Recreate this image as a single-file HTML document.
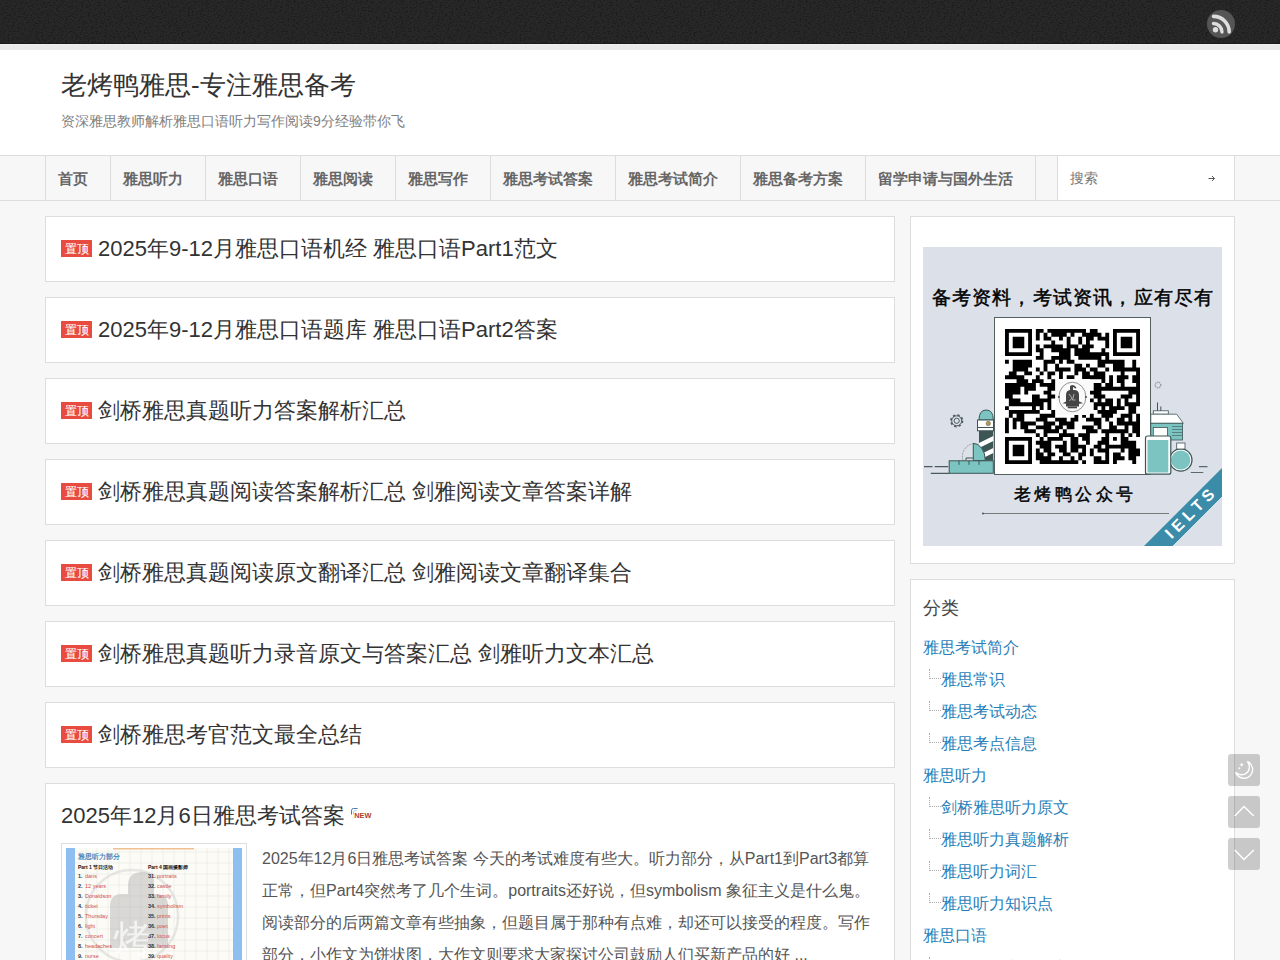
<!DOCTYPE html>
<html><head><meta charset="utf-8">
<style>
*{box-sizing:border-box;margin:0;padding:0}
html,body{width:1280px;height:960px;overflow:hidden}
body{font-family:"Liberation Sans",sans-serif;background:#f7f7f7;color:#333;position:relative}
.topbar{position:absolute;left:0;top:0;width:1280px;height:44px;background:#1e1e1e;border-bottom:1px solid #1b1b1b;overflow:hidden}
.stripe{position:absolute;left:0;top:44px;width:1280px;height:6px;background:#eaeaea;border-top:1px solid #f0f0f0}
.header{position:absolute;left:0;top:50px;width:1280px;height:105px;background:#fff}
.site-title{position:absolute;left:61px;top:68px;font-size:26px;line-height:34px;color:#333;white-space:nowrap}
.site-desc{position:absolute;left:61px;top:112px;font-size:14px;line-height:18px;color:#808080;white-space:nowrap}
.nav{position:absolute;left:0;top:155px;width:1280px;height:46px;background:#f7f7f7;border-top:1px solid #ddd;border-bottom:1px solid #ddd}
.nav ul{position:absolute;left:45px;top:0;height:44px;list-style:none;border-left:1px solid #ddd;display:flex}
.nav li{height:44px;line-height:44px;padding:1px 22px 0 12px;border-right:1px solid #ddd;font-size:15px;font-weight:bold;color:#666;white-space:nowrap}
.search{position:absolute;left:1057px;top:0;width:178px;height:44px;background:#fff;border-left:1px solid #ddd;border-right:1px solid #ddd}
.search span{position:absolute;left:12px;top:0;line-height:44px;font-size:14px;color:#777}
.search svg{position:absolute;left:150px;top:18.5px}
.box{position:absolute;left:45px;width:850px;height:66px;background:#fff;border:1px solid #ddd}
.box h2{position:absolute;left:15px;top:0;line-height:64px;font-size:22px;font-weight:normal;color:#333;white-space:nowrap}
.badge{display:inline-block;vertical-align:top;margin-top:23px;width:31px;height:17px;background:#e84b3f;color:#fff;font-size:12px;line-height:19px;text-align:center;margin-right:6px;-webkit-text-stroke:0.12px #fff}
.side{position:absolute;left:910px;width:325px;background:#fff;border:1px solid #ddd}
.qr{position:absolute;left:12px;top:30px;width:299px;height:299px;overflow:hidden}
.cat h3{position:absolute;left:12px;top:16px;font-size:18px;font-weight:normal;color:#444;line-height:24px}
.cat ul{position:absolute;left:12px;top:52px;list-style:none}
.cat li{font-size:16px;line-height:32px;height:32px;color:#2a7fba;white-space:nowrap;position:relative}
.cat li.sub{padding-left:18px}
.cat li.sub:before{content:"";position:absolute;left:6px;top:5px;width:11px;height:9px;border-left:1px dotted #aaa;border-bottom:1px dotted #aaa}
.post{position:absolute;left:45px;top:783px;width:850px;height:200px;background:#fff;border:1px solid #ddd}
.post h2{position:absolute;left:15px;top:17px;font-size:22px;font-weight:normal;line-height:30px;color:#333;white-space:nowrap}
.newic{position:absolute;left:304px;top:22px}
.thumb{position:absolute;left:15px;top:59px;width:186px;height:140px;border:1px solid #ddd;background:#fff;overflow:hidden}
.excerpt{position:absolute;left:216px;top:59px;width:620px;font-size:16px;line-height:32px;color:#555}
.fbtn{position:absolute;left:1228px;width:32px;height:32px;background:rgba(0,0,0,0.19);border-radius:3px}
.fbtn svg{position:absolute;left:0;top:0}
.rss{position:absolute;left:1207px;top:10px}
</style></head><body>
<div class="topbar"><svg width="1280" height="43" style="position:absolute;left:0;top:0"><filter id="nz" x="0" y="0" width="100%" height="100%"><feTurbulence type="fractalNoise" baseFrequency="0.5 0.8" numOctaves="2" seed="3"/><feColorMatrix values="3 0 0 0 -1  3 0 0 0 -1  3 0 0 0 -1  0 0 0 0 0.05"/></filter><rect width="1280" height="43" filter="url(#nz)"/></svg></div>
<div class="stripe"></div>
<svg class="rss" width="28" height="28" viewBox="0 0 28 28"><circle cx="14" cy="14" r="14" fill="#555"/><circle cx="8.5" cy="19.7" r="2.7" fill="#ddd"/><path d="M6.5 13.5a8.5 8.5 0 0 1 8.5 8.5" fill="none" stroke="#ddd" stroke-width="3.4" stroke-linecap="round"/><path d="M6.6 6.4a15.6 15.6 0 0 1 15.6 15.6" fill="none" stroke="#ddd" stroke-width="3.6" stroke-linecap="round"/></svg>
<div class="header"></div>
<div class="site-title">老烤鸭雅思-专注雅思备考</div>
<div class="site-desc">资深雅思教师解析雅思口语听力写作阅读9分经验带你飞</div>
<div class="nav">
<ul><li>首页</li><li>雅思听力</li><li>雅思口语</li><li>雅思阅读</li><li>雅思写作</li><li>雅思考试答案</li><li>雅思考试简介</li><li>雅思备考方案</li><li>留学申请与国外生活</li></ul>
<div class="search"><span>搜索</span><svg width="8" height="7" viewBox="0 0 8 7"><path d="M0.5 3.5h6M4 1L6.5 3.5 4 6" fill="none" stroke="#555" stroke-width="1"/></svg></div>
</div>

<div class="box" style="top:216px"><h2><span class="badge">置顶</span>2025年9-12月雅思口语机经 雅思口语Part1范文</h2></div>
<div class="box" style="top:297px"><h2><span class="badge">置顶</span>2025年9-12月雅思口语题库 雅思口语Part2答案</h2></div>
<div class="box" style="top:378px"><h2><span class="badge">置顶</span>剑桥雅思真题听力答案解析汇总</h2></div>
<div class="box" style="top:459px"><h2><span class="badge">置顶</span>剑桥雅思真题阅读答案解析汇总 剑雅阅读文章答案详解</h2></div>
<div class="box" style="top:540px"><h2><span class="badge">置顶</span>剑桥雅思真题阅读原文翻译汇总 剑雅阅读文章翻译集合</h2></div>
<div class="box" style="top:621px"><h2><span class="badge">置顶</span>剑桥雅思真题听力录音原文与答案汇总 剑雅听力文本汇总</h2></div>
<div class="box" style="top:702px"><h2><span class="badge">置顶</span>剑桥雅思考官范文最全总结</h2></div>

<div class="post">
<h2>2025年12月6日雅思考试答案</h2>
<svg class="newic" width="24" height="13" viewBox="0 0 24 13"><path d="M1.5 8.5V4.5Q1.5 2.5 3.5 2.5H7.5" fill="none" stroke="#4a78a8" stroke-width="1"/><path d="M3.5 8.5V6Q3.5 4.5 5 4.5H6.5" fill="none" stroke="#a8c0dc" stroke-width="0.8"/><text x="4.2" y="11.5" font-family="Liberation Sans" font-size="7" font-weight="bold" fill="#b0402a" textLength="17.2" lengthAdjust="spacingAndGlyphs">NEW</text></svg>
<div class="thumb"><svg width="176" height="130" viewBox="0 0 176 130" style="position:absolute;left:4px;top:4px" font-family="Liberation Sans">
<rect width="176" height="130" fill="#fcfbf6"/>
<path d="M20 0v130M31 0v130M42 0v130M53 0v130M64 0v130M75 0v130M86 0v130M97 0v130M108 0v130M119 0v130M130 0v130M141 0v130M152 0v130M163 0v130M9 4h158M9 15h158M9 26h158M9 37h158M9 48h158M9 59h158M9 70h158M9 81h158M9 92h158M9 103h158M9 114h158M9 125h158" stroke="#e6ebe8" stroke-width="0.6"/>
<rect x="0" y="0" width="9" height="130" fill="#8fbff0"/>
<rect x="167" y="0" width="9" height="130" fill="#8fbff0"/>
<rect x="47" y="0" width="81" height="1.5" fill="#f0c090"/>
<text x="12" y="11" font-size="6.5" font-weight="bold" fill="#4a80b8">雅思听力部分</text>
<text x="12" y="20.5" font-size="5" font-weight="bold" fill="#111">Part 1 节日活动</text>
<text x="82" y="20.5" font-size="5" font-weight="bold" fill="#111">Part 4 国画摄影师</text>
<circle cx="66" cy="68" r="46" fill="none" stroke="#ccc" stroke-width="2.5" opacity="0.45"/>
<path d="M44 100 v-42 q0-12 12-12 h6 v-8 q0-14 14-14 q12 0 12 10 v12 h2 q12 0 12 12 v42 z" fill="#999" opacity="0.35"/>
<text x="12" y="30.2" font-size="5.5" font-weight="bold" fill="#333">1.</text><text x="19" y="30.2" font-size="5.5" fill="#d05050">dans</text><text x="82" y="30.2" font-size="5.5" font-weight="bold" fill="#333">31.</text><text x="91" y="30.2" font-size="5.5" fill="#d05050">portraits</text><text x="12" y="40.1" font-size="5.5" font-weight="bold" fill="#333">2.</text><text x="19" y="40.1" font-size="5.5" fill="#d05050">12 years</text><text x="82" y="40.1" font-size="5.5" font-weight="bold" fill="#333">32.</text><text x="91" y="40.1" font-size="5.5" fill="#d05050">castle</text><text x="12" y="49.9" font-size="5.5" font-weight="bold" fill="#333">3.</text><text x="19" y="49.9" font-size="5.5" fill="#d05050">Donaldson</text><text x="82" y="49.9" font-size="5.5" font-weight="bold" fill="#333">33.</text><text x="91" y="49.9" font-size="5.5" fill="#d05050">family</text><text x="12" y="59.9" font-size="5.5" font-weight="bold" fill="#333">4.</text><text x="19" y="59.9" font-size="5.5" fill="#d05050">ticket</text><text x="82" y="59.9" font-size="5.5" font-weight="bold" fill="#333">34.</text><text x="91" y="59.9" font-size="5.5" fill="#d05050">symbolism</text><text x="12" y="69.8" font-size="5.5" font-weight="bold" fill="#333">5.</text><text x="19" y="69.8" font-size="5.5" fill="#d05050">Thursday</text><text x="82" y="69.8" font-size="5.5" font-weight="bold" fill="#333">35.</text><text x="91" y="69.8" font-size="5.5" fill="#d05050">prints</text><text x="12" y="79.8" font-size="5.5" font-weight="bold" fill="#333">6.</text><text x="19" y="79.8" font-size="5.5" fill="#d05050">light</text><text x="82" y="79.8" font-size="5.5" font-weight="bold" fill="#333">36.</text><text x="91" y="79.8" font-size="5.5" fill="#d05050">poet</text><text x="12" y="89.8" font-size="5.5" font-weight="bold" fill="#333">7.</text><text x="19" y="89.8" font-size="5.5" fill="#d05050">concert</text><text x="82" y="89.8" font-size="5.5" font-weight="bold" fill="#333">37.</text><text x="91" y="89.8" font-size="5.5" fill="#d05050">locus</text><text x="12" y="99.8" font-size="5.5" font-weight="bold" fill="#333">8.</text><text x="19" y="99.8" font-size="5.5" fill="#d05050">headaches</text><text x="82" y="99.8" font-size="5.5" font-weight="bold" fill="#333">38.</text><text x="91" y="99.8" font-size="5.5" fill="#d05050">farming</text><text x="12" y="109.8" font-size="5.5" font-weight="bold" fill="#333">9.</text><text x="19" y="109.8" font-size="5.5" fill="#d05050">nurse</text><text x="82" y="109.8" font-size="5.5" font-weight="bold" fill="#333">39.</text><text x="91" y="109.8" font-size="5.5" fill="#d05050">quality</text><text x="12" y="119.8" font-size="5.5" font-weight="bold" fill="#333">10.</text><text x="19" y="119.8" font-size="5.5" fill="#d05050">tea</text><text x="82" y="119.8" font-size="5.5" font-weight="bold" fill="#333">40.</text><text x="91" y="119.8" font-size="5.5" fill="#d05050">wood</text>
<text x="66" y="104" text-anchor="middle" font-size="38" fill="#fff" opacity="0.7">烤</text>
</svg></div>
<div class="excerpt">2025年12月6日雅思考试答案 今天的考试难度有些大。听力部分，从Part1到Part3都算正常，但Part4突然考了几个生词。portraits还好说，但symbolism 象征主义是什么鬼。阅读部分的后两篇文章有些抽象，但题目属于那种有点难，却还可以接受的程度。写作部分，小作文为饼状图，大作文则要求大家探讨公司鼓励人们买新产品的好 ...</div>
</div>

<div class="side" style="top:216px;height:348px"><div class="qr"><svg width="300" height="300" viewBox="0 0 300 300" style="position:absolute;left:0;top:0">
<rect width="300" height="300" fill="#dce0e8"/>
<text x="150" y="57" text-anchor="middle" font-family="Liberation Serif" font-size="19" fill="#000" stroke="#000" stroke-width="0.45" letter-spacing="1.2">备考资料，考试资讯，应有尽有</text>
<!-- left illustration -->
<circle cx="33.7" cy="173.8" r="5.8" fill="none" stroke="#4a5a5a" stroke-width="1.6" stroke-dasharray="2.3 2.25"/>
<circle cx="33.7" cy="173.8" r="5" fill="none" stroke="#4a5a5a" stroke-width="1"/>
<circle cx="33.7" cy="173.8" r="2.6" fill="none" stroke="#4a5a5a" stroke-width="1"/>
<path d="M1 219.7h8.5M11.7 219.7h13.5M7.8 226.3h18.5" stroke="#4a5a5a" stroke-width="1.2"/>
<path d="M56 173 q0-10 7.2-10 q7.1 0 7.1 10z" fill="#7cc4c2" stroke="#3d5555" stroke-width="1"/>
<rect x="54.5" y="173" width="16" height="7.5" fill="#fff" stroke="#3d5555" stroke-width="1"/>
<circle cx="65.3" cy="176.5" r="2.2" fill="#b49a4a" stroke="#555" stroke-width="0.5"/>
<rect x="54.5" y="180.5" width="16" height="3.3" fill="#fff" stroke="#3d5555" stroke-width="1"/>
<path d="M56 183.8h14.3v30h-14.3z" fill="#3d5555"/>
<path d="M56 196 l14.3 -7 v5 l-14.3 7z M56 208 l14.3 -7 v5 l-14.3 7z" fill="#fff"/>
<path d="M40 213.5 a13 13 0 0 1 12 -17" fill="none" stroke="#7a8a8a" stroke-width="0.8" stroke-dasharray="2 1"/>
<path d="M50.3 213.5 v-17.2 a12 17.2 0 0 1 12 17.2z" fill="#7cc4c2" stroke="#3d5555" stroke-width="1"/>
<path d="M43 213.5 v-2.5 h7.3" fill="none" stroke="#3d5555" stroke-width="1"/>
<rect x="26.2" y="213.8" width="44.1" height="12.5" fill="#7cc4c2" stroke="#3d5555" stroke-width="1"/>
<path d="M36 213.8v4M46 213.8v4M56 213.8v4" stroke="#3d5555" stroke-width="1"/>
<!-- QR card -->
<rect x="71.5" y="70.5" width="156" height="157" fill="#fff" stroke="#52605f" stroke-width="1"/>
<path transform="translate(82,82)" d="M0.00 0.00h27.00v3.86h-27.00zM30.86 0.00h7.71v3.86h-7.71zM42.43 0.00h38.57v3.86h-38.57zM84.86 0.00h7.71v3.86h-7.71zM108.00 0.00h27.00v3.86h-27.00zM0.00 3.86h3.86v3.86h-3.86zM23.14 3.86h3.86v3.86h-3.86zM30.86 3.86h3.86v3.86h-3.86zM38.57 3.86h3.86v3.86h-3.86zM46.29 3.86h15.43v3.86h-15.43zM65.57 3.86h3.86v3.86h-3.86zM77.14 3.86h19.29v3.86h-19.29zM100.29 3.86h3.86v3.86h-3.86zM108.00 3.86h3.86v3.86h-3.86zM131.14 3.86h3.86v3.86h-3.86zM0.00 7.71h3.86v3.86h-3.86zM7.71 7.71h11.57v3.86h-11.57zM23.14 7.71h3.86v3.86h-3.86zM30.86 7.71h3.86v3.86h-3.86zM38.57 7.71h7.71v3.86h-7.71zM54.00 7.71h3.86v3.86h-3.86zM61.71 7.71h3.86v3.86h-3.86zM73.29 7.71h3.86v3.86h-3.86zM81.00 7.71h7.71v3.86h-7.71zM92.57 7.71h11.57v3.86h-11.57zM108.00 7.71h3.86v3.86h-3.86zM115.71 7.71h11.57v3.86h-11.57zM131.14 7.71h3.86v3.86h-3.86zM0.00 11.57h3.86v3.86h-3.86zM7.71 11.57h11.57v3.86h-11.57zM23.14 11.57h3.86v3.86h-3.86zM46.29 11.57h3.86v3.86h-3.86zM61.71 11.57h3.86v3.86h-3.86zM73.29 11.57h3.86v3.86h-3.86zM81.00 11.57h3.86v3.86h-3.86zM100.29 11.57h3.86v3.86h-3.86zM108.00 11.57h3.86v3.86h-3.86zM115.71 11.57h11.57v3.86h-11.57zM131.14 11.57h3.86v3.86h-3.86zM0.00 15.43h3.86v3.86h-3.86zM7.71 15.43h11.57v3.86h-11.57zM23.14 15.43h3.86v3.86h-3.86zM30.86 15.43h3.86v3.86h-3.86zM38.57 15.43h19.29v3.86h-19.29zM61.71 15.43h11.57v3.86h-11.57zM77.14 15.43h11.57v3.86h-11.57zM100.29 15.43h3.86v3.86h-3.86zM108.00 15.43h3.86v3.86h-3.86zM115.71 15.43h11.57v3.86h-11.57zM131.14 15.43h3.86v3.86h-3.86zM0.00 19.29h3.86v3.86h-3.86zM23.14 19.29h3.86v3.86h-3.86zM30.86 19.29h7.71v3.86h-7.71zM46.29 19.29h19.29v3.86h-19.29zM69.43 19.29h15.43v3.86h-15.43zM96.43 19.29h3.86v3.86h-3.86zM108.00 19.29h3.86v3.86h-3.86zM131.14 19.29h3.86v3.86h-3.86zM0.00 23.14h27.00v3.86h-27.00zM34.71 23.14h3.86v3.86h-3.86zM54.00 23.14h11.57v3.86h-11.57zM69.43 23.14h34.71v3.86h-34.71zM108.00 23.14h27.00v3.86h-27.00zM30.86 27.00h7.71v3.86h-7.71zM46.29 27.00h19.29v3.86h-19.29zM73.29 27.00h23.14v3.86h-23.14zM100.29 27.00h3.86v3.86h-3.86zM0.00 30.86h3.86v3.86h-3.86zM7.71 30.86h19.29v3.86h-19.29zM38.57 30.86h11.57v3.86h-11.57zM54.00 30.86h3.86v3.86h-3.86zM61.71 30.86h7.71v3.86h-7.71zM92.57 30.86h27.00v3.86h-27.00zM127.29 30.86h3.86v3.86h-3.86zM7.71 34.71h19.29v3.86h-19.29zM38.57 34.71h3.86v3.86h-3.86zM50.14 34.71h3.86v3.86h-3.86zM69.43 34.71h7.71v3.86h-7.71zM81.00 34.71h3.86v3.86h-3.86zM92.57 34.71h7.71v3.86h-7.71zM108.00 34.71h11.57v3.86h-11.57zM127.29 34.71h3.86v3.86h-3.86zM7.71 38.57h15.43v3.86h-15.43zM30.86 38.57h3.86v3.86h-3.86zM38.57 38.57h3.86v3.86h-3.86zM50.14 38.57h15.43v3.86h-15.43zM69.43 38.57h11.57v3.86h-11.57zM84.86 38.57h7.71v3.86h-7.71zM100.29 38.57h3.86v3.86h-3.86zM108.00 38.57h27.00v3.86h-27.00zM3.86 42.43h7.71v3.86h-7.71zM19.29 42.43h7.71v3.86h-7.71zM34.71 42.43h3.86v3.86h-3.86zM42.43 42.43h7.71v3.86h-7.71zM54.00 42.43h3.86v3.86h-3.86zM69.43 42.43h3.86v3.86h-3.86zM77.14 42.43h7.71v3.86h-7.71zM88.71 42.43h11.57v3.86h-11.57zM115.71 42.43h3.86v3.86h-3.86zM131.14 42.43h3.86v3.86h-3.86zM0.00 46.29h19.29v3.86h-19.29zM30.86 46.29h3.86v3.86h-3.86zM42.43 46.29h3.86v3.86h-3.86zM54.00 46.29h3.86v3.86h-3.86zM61.71 46.29h7.71v3.86h-7.71zM77.14 46.29h23.14v3.86h-23.14zM104.14 46.29h3.86v3.86h-3.86zM111.86 46.29h11.57v3.86h-11.57zM127.29 46.29h7.71v3.86h-7.71zM11.57 50.14h11.57v3.86h-11.57zM27.00 50.14h11.57v3.86h-11.57zM46.29 50.14h3.86v3.86h-3.86zM96.43 50.14h3.86v3.86h-3.86zM104.14 50.14h3.86v3.86h-3.86zM111.86 50.14h7.71v3.86h-7.71zM127.29 50.14h7.71v3.86h-7.71zM0.00 54.00h30.86v3.86h-30.86zM34.71 54.00h15.43v3.86h-15.43zM88.71 54.00h7.71v3.86h-7.71zM100.29 54.00h7.71v3.86h-7.71zM115.71 54.00h3.86v3.86h-3.86zM131.14 54.00h3.86v3.86h-3.86zM0.00 57.86h15.43v3.86h-15.43zM19.29 57.86h11.57v3.86h-11.57zM42.43 57.86h7.71v3.86h-7.71zM88.71 57.86h46.29v3.86h-46.29zM0.00 61.71h15.43v3.86h-15.43zM19.29 61.71h3.86v3.86h-3.86zM38.57 61.71h7.71v3.86h-7.71zM84.86 61.71h11.57v3.86h-11.57zM123.43 61.71h11.57v3.86h-11.57zM0.00 65.57h7.71v3.86h-7.71zM27.00 65.57h7.71v3.86h-7.71zM42.43 65.57h7.71v3.86h-7.71zM88.71 65.57h11.57v3.86h-11.57zM115.71 65.57h11.57v3.86h-11.57zM131.14 65.57h3.86v3.86h-3.86zM3.86 69.43h11.57v3.86h-11.57zM27.00 69.43h19.29v3.86h-19.29zM84.86 69.43h3.86v3.86h-3.86zM92.57 69.43h3.86v3.86h-3.86zM100.29 69.43h7.71v3.86h-7.71zM111.86 69.43h3.86v3.86h-3.86zM119.57 69.43h3.86v3.86h-3.86zM131.14 69.43h3.86v3.86h-3.86zM3.86 73.29h34.71v3.86h-34.71zM42.43 73.29h3.86v3.86h-3.86zM88.71 73.29h19.29v3.86h-19.29zM111.86 73.29h3.86v3.86h-3.86zM119.57 73.29h15.43v3.86h-15.43zM0.00 77.14h3.86v3.86h-3.86zM27.00 77.14h3.86v3.86h-3.86zM34.71 77.14h3.86v3.86h-3.86zM42.43 77.14h3.86v3.86h-3.86zM88.71 77.14h3.86v3.86h-3.86zM96.43 77.14h3.86v3.86h-3.86zM104.14 77.14h15.43v3.86h-15.43zM123.43 77.14h7.71v3.86h-7.71zM3.86 81.00h30.86v3.86h-30.86zM46.29 81.00h3.86v3.86h-3.86zM92.57 81.00h19.29v3.86h-19.29zM123.43 81.00h7.71v3.86h-7.71zM3.86 84.86h3.86v3.86h-3.86zM11.57 84.86h7.71v3.86h-7.71zM34.71 84.86h15.43v3.86h-15.43zM69.43 84.86h3.86v3.86h-3.86zM77.14 84.86h3.86v3.86h-3.86zM84.86 84.86h3.86v3.86h-3.86zM96.43 84.86h11.57v3.86h-11.57zM115.71 84.86h11.57v3.86h-11.57zM131.14 84.86h3.86v3.86h-3.86zM0.00 88.71h3.86v3.86h-3.86zM7.71 88.71h11.57v3.86h-11.57zM30.86 88.71h11.57v3.86h-11.57zM50.14 88.71h11.57v3.86h-11.57zM65.57 88.71h7.71v3.86h-7.71zM81.00 88.71h15.43v3.86h-15.43zM100.29 88.71h3.86v3.86h-3.86zM111.86 88.71h7.71v3.86h-7.71zM123.43 88.71h3.86v3.86h-3.86zM131.14 88.71h3.86v3.86h-3.86zM0.00 92.57h3.86v3.86h-3.86zM7.71 92.57h3.86v3.86h-3.86zM15.43 92.57h15.43v3.86h-15.43zM38.57 92.57h11.57v3.86h-11.57zM54.00 92.57h15.43v3.86h-15.43zM88.71 92.57h7.71v3.86h-7.71zM104.14 92.57h3.86v3.86h-3.86zM111.86 92.57h23.14v3.86h-23.14zM0.00 96.43h3.86v3.86h-3.86zM7.71 96.43h3.86v3.86h-3.86zM15.43 96.43h7.71v3.86h-7.71zM30.86 96.43h15.43v3.86h-15.43zM50.14 96.43h7.71v3.86h-7.71zM61.71 96.43h7.71v3.86h-7.71zM77.14 96.43h11.57v3.86h-11.57zM92.57 96.43h3.86v3.86h-3.86zM104.14 96.43h7.71v3.86h-7.71zM119.57 96.43h3.86v3.86h-3.86zM127.29 96.43h7.71v3.86h-7.71zM0.00 100.29h3.86v3.86h-3.86zM19.29 100.29h11.57v3.86h-11.57zM38.57 100.29h15.43v3.86h-15.43zM57.86 100.29h3.86v3.86h-3.86zM81.00 100.29h11.57v3.86h-11.57zM96.43 100.29h27.00v3.86h-27.00zM127.29 100.29h7.71v3.86h-7.71zM30.86 104.14h3.86v3.86h-3.86zM38.57 104.14h3.86v3.86h-3.86zM54.00 104.14h15.43v3.86h-15.43zM73.29 104.14h11.57v3.86h-11.57zM100.29 104.14h3.86v3.86h-3.86zM115.71 104.14h3.86v3.86h-3.86zM123.43 104.14h3.86v3.86h-3.86zM131.14 104.14h3.86v3.86h-3.86zM0.00 108.00h27.00v3.86h-27.00zM34.71 108.00h3.86v3.86h-3.86zM42.43 108.00h15.43v3.86h-15.43zM65.57 108.00h7.71v3.86h-7.71zM77.14 108.00h7.71v3.86h-7.71zM96.43 108.00h7.71v3.86h-7.71zM108.00 108.00h3.86v3.86h-3.86zM115.71 108.00h7.71v3.86h-7.71zM0.00 111.86h3.86v3.86h-3.86zM23.14 111.86h3.86v3.86h-3.86zM30.86 111.86h15.43v3.86h-15.43zM57.86 111.86h3.86v3.86h-3.86zM65.57 111.86h7.71v3.86h-7.71zM81.00 111.86h3.86v3.86h-3.86zM92.57 111.86h11.57v3.86h-11.57zM115.71 111.86h15.43v3.86h-15.43zM0.00 115.71h3.86v3.86h-3.86zM7.71 115.71h11.57v3.86h-11.57zM23.14 115.71h3.86v3.86h-3.86zM34.71 115.71h11.57v3.86h-11.57zM50.14 115.71h11.57v3.86h-11.57zM65.57 115.71h15.43v3.86h-15.43zM88.71 115.71h7.71v3.86h-7.71zM100.29 115.71h30.86v3.86h-30.86zM0.00 119.57h3.86v3.86h-3.86zM7.71 119.57h11.57v3.86h-11.57zM23.14 119.57h3.86v3.86h-3.86zM30.86 119.57h3.86v3.86h-3.86zM38.57 119.57h7.71v3.86h-7.71zM54.00 119.57h7.71v3.86h-7.71zM65.57 119.57h7.71v3.86h-7.71zM77.14 119.57h3.86v3.86h-3.86zM84.86 119.57h3.86v3.86h-3.86zM92.57 119.57h11.57v3.86h-11.57zM115.71 119.57h3.86v3.86h-3.86zM123.43 119.57h11.57v3.86h-11.57zM0.00 123.43h3.86v3.86h-3.86zM7.71 123.43h11.57v3.86h-11.57zM23.14 123.43h3.86v3.86h-3.86zM30.86 123.43h7.71v3.86h-7.71zM42.43 123.43h7.71v3.86h-7.71zM57.86 123.43h7.71v3.86h-7.71zM73.29 123.43h7.71v3.86h-7.71zM84.86 123.43h3.86v3.86h-3.86zM100.29 123.43h3.86v3.86h-3.86zM108.00 123.43h7.71v3.86h-7.71zM123.43 123.43h11.57v3.86h-11.57zM0.00 127.29h3.86v3.86h-3.86zM23.14 127.29h3.86v3.86h-3.86zM30.86 127.29h15.43v3.86h-15.43zM54.00 127.29h3.86v3.86h-3.86zM65.57 127.29h3.86v3.86h-3.86zM73.29 127.29h3.86v3.86h-3.86zM88.71 127.29h7.71v3.86h-7.71zM100.29 127.29h3.86v3.86h-3.86zM108.00 127.29h11.57v3.86h-11.57zM123.43 127.29h7.71v3.86h-7.71zM0.00 131.14h27.00v3.86h-27.00zM34.71 131.14h38.57v3.86h-38.57zM77.14 131.14h3.86v3.86h-3.86zM88.71 131.14h15.43v3.86h-15.43zM108.00 131.14h3.86v3.86h-3.86zM127.29 131.14h3.86v3.86h-3.86z" fill="#000"/>
<rect x="133" y="132" width="34" height="36" fill="#fafafa"/>
<ellipse cx="149.4" cy="150" rx="13.5" ry="14.8" fill="none" stroke="#777" stroke-width="0.8"/>
<circle cx="135.9" cy="150" r="1.1" fill="#555"/><circle cx="162.9" cy="150" r="1.1" fill="#555"/>
<path d="M143 159.5v-11.5q0-5 5-5h3q5 0 5 5v11.5z" fill="#454545"/>
<path d="M139.5 156.2l3.5-1.8h13.5l3.5 1.8-3.5 0.6h-13.5z" fill="#454545"/>
<path d="M144.7 159.5h9.3v1.8h-9.3z" fill="#454545"/>
<path d="M147 143.5v-4q0-1.5 2.5-1.5q2.5 0 4 3l-1.5 0.5q-1-1.5-2-1.5v3.5z" fill="#454545"/>
<path d="M146 147l3 4-2.5 3M151 147l-1.5 6h3" fill="none" stroke="#bbb" stroke-width="0.9"/>
<!-- right illustration -->
<path d="M234.5 165.5v-10M237.8 165.5v-6" stroke="#3d5555" stroke-width="1"/>
<rect x="230.3" y="163.8" width="15" height="3.4" fill="#fff" stroke="#3d5555" stroke-width="0.8"/>
<path d="M227.8 167.2h25.9l6.6 9.1h-32.5z" fill="#fff" stroke="#3d5555" stroke-width="0.8"/>
<rect x="227.8" y="176.3" width="31.7" height="16.7" fill="#7cc4c2" stroke="#3d5555" stroke-width="0.8"/>
<path d="M249 179.5h10M249 182.5h10M249 185.5h10M249 188.5h10" stroke="#3d5555" stroke-width="0.6"/>
<rect x="230.3" y="180.5" width="14.2" height="9.2" fill="#fff" stroke="#3d5555" stroke-width="0.8"/>
<circle cx="257.8" cy="213" r="11.2" fill="#fff" stroke="#3d5555" stroke-width="1.2"/>
<circle cx="257.8" cy="213" r="9.6" fill="#7cc4c2"/>
<rect x="253.7" y="196" width="8.3" height="6" fill="#fff" stroke="#3d5555" stroke-width="0.8"/>
<rect x="222.5" y="189" width="25.3" height="38.2" rx="2" fill="#fff" stroke="#3d5555" stroke-width="1.2"/>
<rect x="224.5" y="193" width="20.8" height="32.5" fill="#7cc4c2"/>
<path d="M276 219.7h8.5M267.8 225.5h12.5" stroke="#5a6a6a" stroke-width="1.2"/>
<circle cx="235" cy="138" r="2.8" fill="none" stroke="#8a9494" stroke-width="1.2" stroke-dasharray="1.2 0.8"/>
<!-- bottom -->
<text x="152" y="253" text-anchor="middle" font-family="Liberation Serif" font-size="17" fill="#000" stroke="#000" stroke-width="0.45" letter-spacing="3.5">老烤鸭公众号</text>
<path d="M60 266.5h186" stroke="#6a7272" stroke-width="0.9"/>
<circle cx="60" cy="266.5" r="1" fill="#3d5555"/>
<!-- IELTS ribbon -->
<polygon points="220,300 249,300 300,249 300,220" fill="#3a8ca8"/>
<path d="M249 300L300 249" stroke="#cfe3ea" stroke-width="1"/><text x="2" y="0" transform="translate(266.5,266) rotate(-45)" text-anchor="middle" font-family="Liberation Sans" font-size="16" font-weight="bold" fill="#fff" letter-spacing="4.5" dy="6">IELTS</text>
</svg></div></div>
<div class="side cat" style="top:579px;height:400px">
<h3>分类</h3>
<ul>
<li>雅思考试简介</li>
<li class="sub">雅思常识</li>
<li class="sub">雅思考试动态</li>
<li class="sub">雅思考点信息</li>
<li>雅思听力</li>
<li class="sub">剑桥雅思听力原文</li>
<li class="sub">雅思听力真题解析</li>
<li class="sub">雅思听力词汇</li>
<li class="sub">雅思听力知识点</li>
<li>雅思口语</li>
<li class="sub">雅思口语真题范文</li>
</ul>
</div>

<div class="fbtn" style="top:754px"><svg width="32" height="32" viewBox="0 0 32 32"><path d="M19.3 7.5a8.7 8.7 0 1 1 -11.6 10.8a7.4 7.4 0 0 0 11.6 -10.8z" fill="none" stroke="#fff" stroke-width="1.4"/><path d="M13.7 8.6l0.7 1.4 1.4 0.7-1.4 0.7-0.7 1.4-0.7-1.4-1.4-0.7 1.4-0.7z" fill="#fff"/><circle cx="11.4" cy="14.2" r="0.9" fill="#fff"/></svg></div>
<div class="fbtn" style="top:796px"><svg width="32" height="32" viewBox="0 0 32 32"><path d="M6.8 20L16 10.5 25.8 20" fill="none" stroke="#fff" stroke-width="1.5"/></svg></div>
<div class="fbtn" style="top:838px"><svg width="32" height="32" viewBox="0 0 32 32"><path d="M6.8 12L16 21.5 25.8 12" fill="none" stroke="#fff" stroke-width="1.5"/></svg></div>
</body></html>
